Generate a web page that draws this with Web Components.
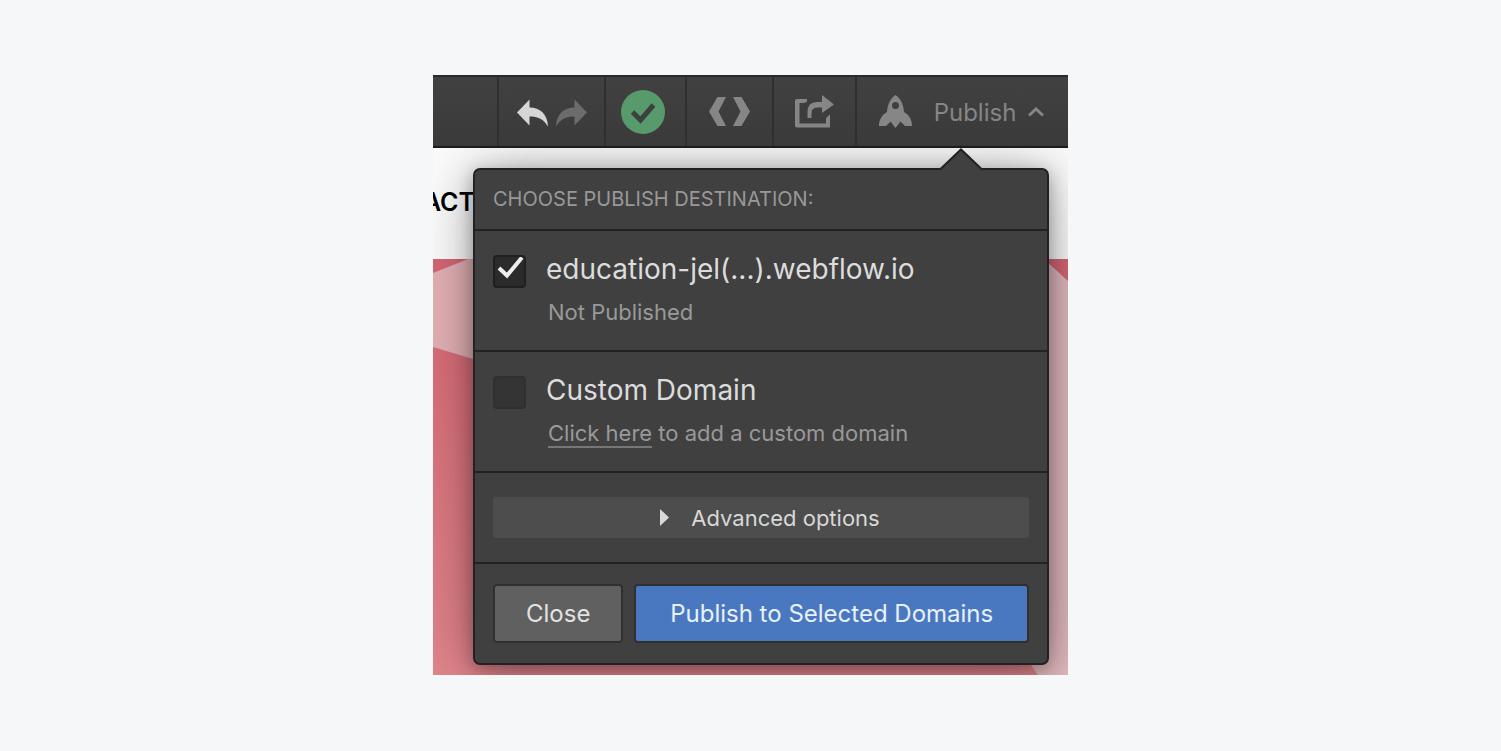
<!DOCTYPE html>
<html lang="en">
<head>
<meta charset="utf-8">
<title>Publish</title>
<style>
	body {
		margin: 0;
		min-height: 100vh;
		box-sizing: border-box;
		padding: 75px 20px;
		background-color: #f5f7f9;
		font-family: Inter, "Liberation Sans", sans-serif;
	}
</style>
</head>
<body>
<designer-window>
	<tool-bar slot="toolbar"></tool-bar>
	<site-preview slot="preview">ACT</site-preview>
	<publish-panel>
		<span slot="heading">CHOOSE PUBLISH DESTINATION:</span>
		<domain-option checked>
			education-jel(...).webflow.io
			<span slot="hint">Not Published</span>
		</domain-option>
		<domain-option>
			Custom Domain
			<span slot="hint"><hint-link href="#domains">Click here</hint-link> to add a custom domain</span>
		</domain-option>
		<advanced-toggle slot="advanced">Advanced options</advanced-toggle>
		<panel-button slot="actions">Close</panel-button>
		<panel-button slot="actions" primary>Publish to Selected Domains</panel-button>
	</publish-panel>
</designer-window>

<script>
function define(name, html, setup) {
	const tpl = document.createElement('template');
	tpl.innerHTML = html;
	
	window.customElements.define(name, class extends HTMLElement {
		constructor() {
			super();
			this.attachShadow({ mode: 'open' });
			this.shadowRoot.appendChild(tpl.content.cloneNode(true));
		}
		connectedCallback() {
			if (setup) {
				setup(this, this.shadowRoot);
			}
		}
	});
}

define('designer-window', `
	<style>
	:host {
		display: block;
		max-width: 635px;
		margin: 0 auto;
		overflow: hidden;
	}
	#elStage {
		position: relative;
		padding: 20px 19px 10px 40px;
	}
	/* the site lies under the open panel */
	#elPreview {
		position: absolute;
		inset: 0;
		display: flex;
	}
	</style>
	<slot name="toolbar"></slot>
	<div id="elStage">
		<div id="elPreview"><slot name="preview"></slot></div>
		<slot></slot>
	</div>
`);

define('tool-bar', `
	<style>
	:host {
		display: flex;
		position: relative;
		z-index: 1;
		height: 69px;
		border-top: 2px solid #2a2a2a;
		border-bottom: 2px solid #1c1c1c;
		background: linear-gradient(#414141, #3a3a3a);
	}
	div {
		display: flex;
		align-items: center;
		justify-content: center;
		box-sizing: border-box;
		border-right: 2px solid #2f2f2f;
	}
	div:last-child {
		flex: 1;
		padding-right: 2px;
		border: 0;
	}
	button {
		display: flex;
		align-items: center;
		padding: 0;
		border: 0;
		background: none;
		color: #868686;
		font: 24px/30px Inter, "Liberation Sans", sans-serif;
	}
	svg {
		display: block;
		fill: currentColor;
	}
	#elSpace { width: 66px; }
	#elHistory { width: 107px; gap: 8px; padding-top: 2px; }
	#elStatus { width: 81px; padding-right: 5px; }
	#elCode { width: 87px; }
	#elShare { width: 83px; }
	#elUndo { color: #d6d6d6; }
	#elRedo { color: #6c6c6c; }
	#elStatus button { color: #579b6c; }
	#elPublish span { margin: 2px 12px 0 22px; }
	</style>
	<div id="elSpace"></div>
	<div id="elHistory">
		<button id="elUndo" aria-label="Undo">
			<svg width="31" height="28" viewBox="0 0 31 28"><path d="M0 13.500L12.500 0.500V8.500C23 8.500 30.500 15 31 27.500C26.500 20 21 17.500 12.500 17.500V26.500Z"/></svg>
		</button>
		<button id="elRedo" aria-label="Redo">
			<svg width="31" height="28" viewBox="0 0 31 28"><path d="M31 13.500L18.500 0.500V8.500C8 8.500 0.500 15 0 27.500C4.500 20 10 17.500 18.500 17.500V26.500Z"/></svg>
		</button>
	</div>
	<div id="elStatus">
		<button aria-label="Saved">
			<svg width="44" height="44" viewBox="0 0 44 44"><circle cx="22" cy="22" r="22"/><path d="M11.500 22L19.500 30L32.500 15" fill="none" stroke="#3c413e" stroke-width="5"/></svg>
		</button>
	</div>
	<div id="elCode">
		<button aria-label="Export code">
			<svg width="41" height="29" viewBox="0 0 41 29"><path d="M8.500 0H17L9.500 14.500L17 29H8.500L0 14.500ZM32.500 0H24L31.500 14.500L24 29H32.500L41 14.500Z"/></svg>
		</button>
	</div>
	<div id="elShare">
		<button aria-label="Share">
			<svg width="39" height="33" viewBox="0 0 39 33"><path d="M12 4V7L8.500 8H4.500V28.500H31V23L35 19.500V32.500H2Q0 32.500 0 30.500V6Q0 4 2 4ZM27 0L39 9.500L27 18V12.500H23Q16.500 12.500 16.500 18V23H12.500V17Q12.500 7 22 7H27Z"/></svg>
		</button>
	</div>
	<div>
		<button id="elPublish" aria-expanded="true">
			<svg width="33" height="33" viewBox="0 0 33 33"><path fill-rule="evenodd" d="M16.500 0C21 3 24.500 8.500 25 17C30 20 33 24.500 33 31H26L21.500 26.500L16.500 33L11.500 26.500L7 31H0C0 24.500 3 20 8 17C8.500 8.500 12 3 16.500 0ZM16.500 7A3.500 3.500 0 1 0 16.500 14A3.500 3.500 0 1 0 16.500 7Z"/></svg>
			<span>Publish</span>
			<svg width="16" height="10" viewBox="0 0 16 10"><path d="M1 8.500L8 2L15 8.500" fill="none" stroke="currentColor" stroke-width="3"/></svg>
		</button>
	</div>
`);

define('site-preview', `
	<style>
	:host {
		display: flex;
		flex-direction: column;
		flex: 1;
		background: #fcfcfc;
	}
	header {
		display: flex;
		align-items: center;
		justify-content: flex-end;
		width: 42px;
		height: 111px;
		box-sizing: border-box;
		padding-bottom: 4px;
		color: #000;
		font-size: 25px;
		font-weight: 600;
	}
	svg {
		display: block;
		flex: 1;
		width: 100%;
		min-height: 0;
	}
	</style>
	<header><slot></slot></header>
	<svg viewBox="0 0 634 416" preserveAspectRatio="none">
		<defs>
			<linearGradient id="rose" x2="0" y2="1"><stop offset="0" stop-color="#d66673"/><stop offset="1" stop-color="#e2858c"/></linearGradient>
		</defs>
		<rect width="634" height="416" fill="url(#rose)"/>
		<path d="M60 -10L0 14V88L60 106Z" fill="#e3b1b6"/>
		<path d="M610 0L634 22V416H604L590 396Z" fill="#e2b9be"/>
	</svg>
`);

define('publish-panel', `
	<style>
	:host {
		display: block;
		position: relative;
		border: 2px solid #222;
		border-radius: 7px;
		background: #404040;
		box-shadow: 0 4px 18px rgba(0, 0, 0, 0.3), 0 4px 60px rgba(0, 0, 0, 0.35);
	}
	/* arrow up to the Publish button */
	#elArrow {
		position: absolute;
		right: 64px;
		top: -22px;
	}
	header {
		padding: 0 18px;
		color: #989898;
		font-size: 20px;
		line-height: 59px;
	}
	#elAdvanced {
		padding: 24px 18px;
		border-top: 2px solid #222;
	}
	footer {
		display: flex;
		gap: 11px;
		padding: 20px 18px;
		border-top: 2px solid #222;
	}
	</style>
	<svg id="elArrow" width="44" height="24" viewBox="0 0 44 24"><path d="M1 21L22 1L43 21V24H1Z" fill="#404040"/><path d="M1 21.500L22 1.500L43 21.500" fill="none" stroke="#222" stroke-width="2"/></svg>
	<header><slot name="heading"></slot></header>
	<slot></slot>
	<div id="elAdvanced"><slot name="advanced"></slot></div>
	<footer><slot name="actions"></slot></footer>
`);

define('domain-option', `
	<style>
	:host {
		display: grid;
		grid-template-columns: 33px 1fr;
		column-gap: 20px;
		padding: 21px 18px 24px;
		border-top: 2px solid #222;
	}
	input {
		appearance: none;
		box-sizing: border-box;
		width: 33px;
		height: 33px;
		margin: 3px 0 0;
		border: 2px solid #303030;
		border-radius: 4px;
		background: #343434;
	}
	input:checked {
		border-color: #202020;
		background: #2b2b2b url('data:image/svg+xml;utf8,<svg xmlns="http://www.w3.org/2000/svg" viewBox="0 0 29 29"><path d="M4 11L12 18.500L27 0.500" fill="none" stroke="%23eee" stroke-width="4"/></svg>') center / 29px 29px no-repeat;
	}
	label {
		color: #dcdcdc;
		font-size: 28px;
		line-height: 34px;
	}
	#elHint {
		grid-column: 2;
		padding: 10px 0 0 2px;
		color: #999;
		font-size: 22px;
		line-height: 28px;
	}
	</style>
	<input type="checkbox" id="elCheck">
	<label for="elCheck"><slot></slot></label>
	<div id="elHint"><slot name="hint"></slot></div>
`, (host, root) => {
	root.getElementById('elCheck').checked = host.hasAttribute('checked');
});

define('hint-link', `
	<style>
	:host {
		display: inline;
	}
	a {
		border-bottom: 2px solid #777;
		color: inherit;
		text-decoration: none;
	}
	</style>
	<a><slot></slot></a>
`, (host, root) => {
	root.querySelector('a').href = host.getAttribute('href');
});

define('advanced-toggle', `
	<style>
	:host {
		display: block;
	}
	button {
		display: flex;
		align-items: center;
		justify-content: center;
		gap: 22px;
		width: 100%;
		height: 41px;
		padding: 0 0 0 18px;
		border: 0;
		border-radius: 4px;
		background: #4d4d4d;
		color: #d8d8d8;
		font: 22px/28px Inter, "Liberation Sans", sans-serif;
	}
	</style>
	<button aria-expanded="false">
		<svg width="9" height="17" viewBox="0 0 9 17" fill="currentColor"><path d="M0 0L9 8.500L0 17Z"/></svg>
		<slot></slot>
	</button>
`);

define('panel-button', `
	<style>
	:host {
		display: block;
	}
	:host([primary]) {
		flex: 1;
	}
	button {
		width: 100%;
		height: 59px;
		padding: 0 31px;
		border: 2px solid #303030;
		border-radius: 4px;
		background: #606060;
		color: #e2e2e2;
		font: 24px/30px Inter, "Liberation Sans", sans-serif;
		white-space: nowrap;
	}
	:host([primary]) button {
		padding: 0;
		background: #4a78c0;
		color: #e8f0fa;
	}
	</style>
	<button><slot></slot></button>
`);
</script>
</body>
</html>
